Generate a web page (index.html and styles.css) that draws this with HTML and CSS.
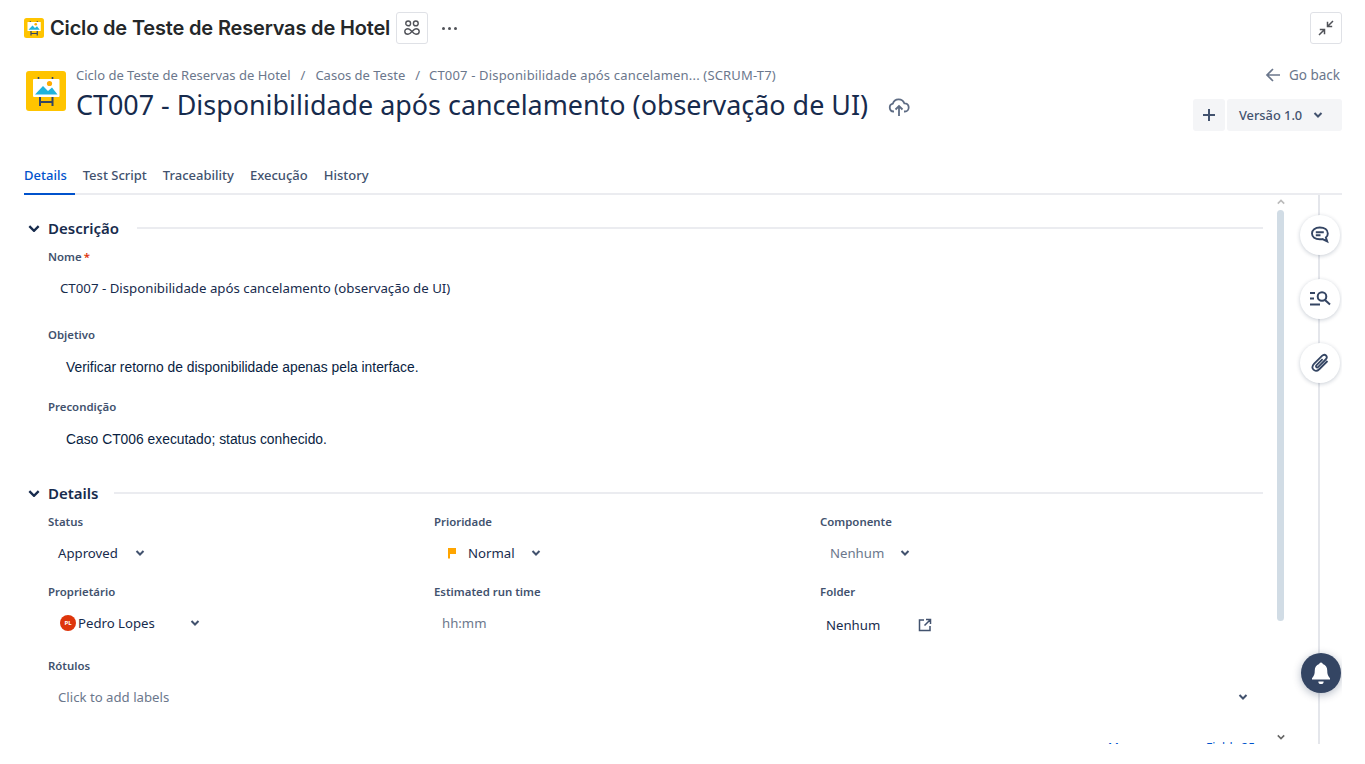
FILE: index.html
```html
<!DOCTYPE html>
<html lang="pt">
<head>
  <meta charset="UTF-8" />
  <meta name="viewport" content="width=device-width, initial-scale=1.0" />
  <title>CT007 - Disponibilidade após cancelamento</title>
  <link rel="stylesheet" href="styles.css">
</head>
<body>
  <div class="page">
    <div class="topbar">
      <svg class="project-icon-small" viewBox="0 0 40 40">
        <rect width="40" height="40" rx="5" fill="#ffc400"/>
        <path d="M12.500 6v4M26.500 6v4" stroke="#344563" stroke-width="2"/>
        <rect x="7" y="8" width="26.500" height="18" rx="1" fill="#fff"/>
        <path d="M9 23.500 17 15l5 5 4-3.500 5.500 7z" fill="#1fb3dc"/>
        <circle cx="23.500" cy="12.500" r="2.600" fill="#ffab00"/>
        <path d="M14 26v9M26.500 26v9M14 31h12.500" stroke="#344563" stroke-width="2.400" fill="none"/>
      </svg>
      <h1 class="project-name">Ciclo de Teste de Reservas de Hotel</h1>
      <button class="square-btn">
        <svg viewBox="0 0 18 18" width="18" height="18" fill="none" stroke="#505258" stroke-width="1.400">
          <circle cx="5.200" cy="4.400" r="2.400"/>
          <circle cx="12.800" cy="4.400" r="2.400"/>
          <path d="M5 9.700c-2 0-3.200 1.200-3.200 2.800S3 15.300 5 15.300c3 0 5-5.600 8-5.600 2 0 3.200 1.200 3.200 2.800s-1.200 2.800-3.200 2.800c-3 0-5-5.600-8-5.600z"/>
        </svg>
      </button>
      <div class="dots"><i></i><i></i><i></i></div>
      <button class="square-btn collapse-btn">
        <svg viewBox="0 0 18 18" width="18" height="18" fill="none" stroke="#505258" stroke-width="1.500">
          <path d="M16 2l-5 5M10.500 2.800v4.700h4.700"/>
          <path d="M2 16l5-5M2.800 10.500h4.700v4.700"/>
        </svg>
      </button>
    </div>

    <div class="issue-head">
      <svg class="project-icon" viewBox="0 0 40 40">
        <rect width="40" height="40" rx="3" fill="#ffc400"/>
        <path d="M12.500 6v4M26.500 6v4" stroke="#344563" stroke-width="1.600"/>
        <rect x="7" y="8" width="26.500" height="18" rx="1" fill="#fff"/>
        <path d="M9 23.500 17 15l5 5 4-3.500 5.500 7z" fill="#1fb3dc"/>
        <circle cx="23.500" cy="12.500" r="2.600" fill="#ffab00"/>
        <path d="M14 26v9M26.500 26v9M14 31h12.500" stroke="#344563" stroke-width="2" fill="none"/>
      </svg>
      <div class="issue-title">
        <div class="breadcrumb">
          <span>Ciclo de Teste de Reservas de Hotel</span><span class="sep">/</span><span>Casos de Teste</span><span class="sep">/</span><span class="crumb-last">CT007 - Disponibilidade após cancelamen... (SCRUM-T7)</span>
        </div>
        <div class="title-row">
          <h2>CT007 - Disponibilidade após cancelamento (observação de UI)</h2>
          <svg class="cloud" viewBox="0 0 22 20" width="22" height="20" fill="none" stroke="#5e6c84" stroke-width="1.800">
            <path d="M6 14.500H5.500a4 4 0 0 1-.6-7.900 6 6 0 0 1 11.400-.3 4 4 0 0 1 .6 8.200H16"/>
            <path d="M11 19v-9M7.500 12.500 11 9l3.500 3.500"/>
          </svg>
        </div>
      </div>
      <div class="issue-actions">
        <a class="go-back">
          <svg viewBox="0 0 16 16" width="16" height="16" fill="none" stroke="#6b778c" stroke-width="1.700"><path d="M15 8H2M8 2 2 8l6 6"/></svg>
          Go back
        </a>
        <div class="version-group">
          <button class="version-add">
            <svg viewBox="0 0 14 14" width="14" height="14" stroke="#42526e" stroke-width="2"><path d="M7 1v12M1 7h12"/></svg>
          </button>
          <button class="version-select">Versão 1.0 <svg class="chev" viewBox="0 0 10 6"><path d="m1.500 1 3.500 3.500L8.500 1"/></svg></button>
        </div>
      </div>
    </div>

    <div class="tabs">
      <a class="tab active">Details</a>
      <a class="tab">Test Script</a>
      <a class="tab">Traceability</a>
      <a class="tab">Execução</a>
      <a class="tab">History</a>
    </div>

    <div class="workspace">
      <div class="panel">
        <div class="section-head">
          <svg class="chev dark" viewBox="0 0 10 6"><path d="m1 1 4 4 4-4"/></svg>
          <h3>Descrição</h3>
          <span class="rule"></span>
        </div>
        <div class="label first">Nome<span class="req">*</span></div>
        <div class="value name-value">CT007 - Disponibilidade após cancelamento (observação de UI)</div>
        <div class="label objetivo">Objetivo</div>
        <div class="value rich">Verificar retorno de disponibilidade apenas pela interface.</div>
        <div class="label precond">Precondição</div>
        <div class="value rich">Caso CT006 executado; status conhecido.</div>

        <div class="section-head details-head">
          <svg class="chev dark" viewBox="0 0 10 6"><path d="m1 1 4 4 4-4"/></svg>
          <h3>Details</h3>
          <span class="rule"></span>
        </div>
        <div class="fields">
          <div class="field">
            <div class="label">Status</div>
            <div class="select status-select">Approved <svg class="chev" viewBox="0 0 10 6"><path d="m1.500 1 3.500 3.500L8.500 1"/></svg></div>
          </div>
          <div class="field">
            <div class="label">Prioridade</div>
            <div class="select prio-select">
              <svg class="flag" viewBox="0 0 10 12" width="10" height="12"><path d="M1 1h8v6H3v4.500H1z" fill="#ffa500"/></svg>
              Normal <svg class="chev" viewBox="0 0 10 6"><path d="m1.500 1 3.500 3.500L8.500 1"/></svg>
            </div>
          </div>
          <div class="field">
            <div class="label">Componente</div>
            <div class="select comp-select"><span class="muted">Nenhum</span> <svg class="chev" viewBox="0 0 10 6"><path d="m1.500 1 3.500 3.500L8.500 1"/></svg></div>
          </div>
          <div class="field">
            <div class="label">Proprietário</div>
            <div class="select owner-select">
              <span class="avatar">PL</span>Pedro Lopes
              <svg class="chev" viewBox="0 0 10 6"><path d="m1.500 1 3.500 3.500L8.500 1"/></svg>
            </div>
          </div>
          <div class="field">
            <div class="label">Estimated run time</div>
            <div class="select time-select"><span class="muted">hh:mm</span></div>
          </div>
          <div class="field">
            <div class="label">Folder</div>
            <div class="select folder-select">Nenhum
              <svg viewBox="0 0 14 14" width="14" height="14" fill="none" stroke="#42526e" stroke-width="1.500"><path d="M6 2H1.500v10.500H12V8M8 1.500h4.500V6M12.500 1.500 6.500 7.500"/></svg>
            </div>
          </div>
        </div>
        <div class="label labels-label">Rótulos</div>
        <div class="labels-row">
          <span class="muted">Click to add labels</span>
          <svg class="chev" viewBox="0 0 10 6"><path d="m1.500 1 3.500 3.500L8.500 1"/></svg>
        </div>
        <div class="more-links"><a class="more-a">More</a><a>Fields 35</a></div>
      </div>

      <div class="scroll-track">
        <svg class="scroll-arrow" viewBox="0 0 10 6"><path d="m1 5 4-4 4 4"/></svg>
        <div class="scroll-thumb"></div>
        <svg class="scroll-arrow down" viewBox="0 0 10 6"><path d="m1 1 4 4 4-4"/></svg>
      </div>

      <div class="rail">
        <button class="rail-btn">
          <svg viewBox="0 0 20 20" width="20" height="20" fill="none" stroke="#344563" stroke-width="1.900">
            <path d="M9.800 2.500c4.700 0 8 2.400 8 5.900 0 1.700-.7 3.100-1.900 4.100l1.300 3.900-4.700-2.300c-.8.200-1.700.2-2.700.2-4.700 0-7.800-2.400-7.800-5.900s3.100-5.900 7.800-5.900z"/>
            <path d="M5.800 7.200h8M5.800 10.200h4.700"/>
          </svg>
        </button>
        <button class="rail-btn">
          <svg viewBox="0 0 22 18" width="22" height="18" fill="none" stroke="#344563" stroke-width="2">
            <path d="M1 3h5M1 8.500h4M1 14.500h10"/>
            <circle cx="13" cy="6.500" r="4.300"/>
            <path d="m16 10 5 4.500"/>
          </svg>
        </button>
        <button class="rail-btn">
          <svg viewBox="0 0 20 20" width="20" height="20" fill="none" stroke="#344563" stroke-width="1.800">
            <path d="M17.500 8 9.500 16c-2 2-4.500 2.200-6 .7s-1.200-4 .7-6l7.800-7.800c1.300-1.300 3-1.400 4-.4s.9 2.700-.4 4l-7.300 7.300c-.7.700-1.500.8-2 .3s-.4-1.300.3-2l6-6"/>
          </svg>
        </button>
        <button class="bell-btn">
          <svg viewBox="0 0 20 20" width="24" height="24" fill="#fff">
            <path d="M10 1.200a1.500 1.500 0 0 1 1.500 1.400c2.500.7 3.700 2.800 3.700 5.400 0 3 .5 4.500 2.300 6.300v1.200h-15v-1.200c1.800-1.800 2.300-3.300 2.300-6.300 0-2.600 1.200-4.700 3.700-5.400A1.500 1.500 0 0 1 10 1.200z"/>
            <path d="M7.800 17h4.400a2.200 2.200 0 0 1-4.400 0z"/>
          </svg>
        </button>
      </div>
    </div>
  </div>
</body>
</html>
```

FILE: styles.css
```css
* {
  box-sizing: border-box;
}
html, body {
  margin: 0;
  padding: 0;
  background: #fff;
}
body {
  font-family: "Noto Sans", "Open Sans", sans-serif;
  color: #172b4d;
  font-size: 14px;
}
.page {
  height: 764px;
  overflow: hidden;
  padding: 0 23px 0 24px;
}
button {
  font-family: inherit;
  border: none;
  background: none;
  padding: 0;
}
svg {
  display: block;
  flex: none;
}

/* top bar */
.topbar {
  display: flex;
  align-items: center;
  padding-top: 12px;
  height: 44px;
}
.project-icon-small {
  width: 20px;
  height: 20px;
  margin-right: 6px;
}
.project-name {
  margin: 0;
  font-family: Inter, sans-serif;
  font-size: 20px;
  font-weight: 600;
  letter-spacing: -0.17px;
  color: #242729;
  margin-right: 6px;
}
.square-btn {
  width: 32px;
  height: 32px;
  display: flex;
  align-items: center;
  justify-content: center;
  border: 1px solid #dfe1e6;
  border-radius: 3px;
}
.dots {
  display: flex;
  gap: 3px;
  margin-left: 14px;
}
.dots i {
  width: 3px;
  height: 3px;
  border-radius: 50%;
  background: #505258;
}
.collapse-btn {
  margin-left: auto;
}

/* issue header */
.issue-head {
  display: flex;
  margin-top: 22px;
  height: 94px;
}
.project-icon {
  width: 40px;
  height: 40px;
  margin: 5px 10px 0 2px;
}
.breadcrumb {
  font-size: 13px;
  line-height: 18px;
  color: #6b778c;
}
.sep {
  margin: 0 10px;
}
.crumb-last {
  letter-spacing: 0.17px;
  margin-left: -1px;
}
.title-row {
  display: flex;
  align-items: center;
  margin-top: 4px;
}
.title-row h2 {
  margin: 0;
  font-size: 26.900px;
  line-height: 34px;
  font-weight: 400;
  color: #172b4d;
}
.cloud {
  margin: 4px 0 0 20px;
}
.issue-actions {
  margin-left: auto;
  display: flex;
  flex-direction: column;
  align-items: flex-end;
}
.go-back {
  display: flex;
  align-items: center;
  gap: 8px;
  color: #6b778c;
  font-size: 13.500px;
  line-height: 18px;
  padding-right: 2px;
}
.version-group {
  display: flex;
  gap: 2px;
  margin-top: 15px;
}
.version-add,
.version-select {
  height: 32px;
  background: #f4f5f7;
  border-radius: 3px;
  display: flex;
  align-items: center;
  color: #42526e;
  font-size: 12.800px;
  font-weight: 500;
}
.version-add {
  width: 32px;
  justify-content: center;
}
.version-select {
  width: 115px;
  padding-left: 12px;
  gap: 11px;
}
.chev {
  width: 10px;
  height: 6px;
  fill: none;
  stroke: #42526e;
  stroke-width: 2;
}
.chev.dark {
  width: 12px;
  height: 7px;
  stroke: #172b4d;
}

/* tabs */
.tabs {
  display: flex;
  border-bottom: 2px solid #ebecf0;
  height: 35px;
}
.tab {
  padding: 5px 8px 0;
  height: 35px;
  font-size: 13px;
  font-weight: 500;
  line-height: 20px;
  color: #42526e;
}
.tab.active {
  padding-left: 0;
  color: #0052cc;
  border-bottom: 2px solid #0052cc;
}

/* main area */
.workspace {
  display: flex;
  height: 549px;
  overflow: hidden;
}
.panel {
  width: 1239px;
  flex: none;
  padding-top: 23px;
}
.section-head {
  display: flex;
  align-items: center;
  height: 20px;
  padding-left: 4px;
}
.section-head h3 {
  margin: 0 0 0 8px;
  font-size: 15px;
  font-weight: 600;
  color: #172b4d;
}
.rule {
  flex: 1;
  height: 2px;
  background: #ebecf0;
  margin-left: 18px;
}
.details-head {
  margin-top: 35px;
}
.details-head .rule {
  margin-left: 15px;
}
.label {
  margin-left: 24px;
  font-size: 11.400px;
  line-height: 16px;
  font-weight: 600;
  color: #42526e;
}
.label.first {
  margin-top: 11px;
}
.req {
  color: #de350b;
  margin-left: 2px;
}
.value {
  font-size: 13.250px;
  line-height: 18px;
  color: #172b4d;
}
.name-value {
  margin: 14px 0 0 36px;
}
.objetivo {
  margin-top: 30px;
}
.precond {
  margin-top: 23px;
}
.rich {
  font-family: "Liberation Sans", Arial, sans-serif;
  font-size: 13.850px;
  margin: 15px 0 0 42px;
  color: #091e42;
}
.fields {
  display: grid;
  grid-template-columns: repeat(3, 386px);
  grid-auto-rows: 70px;
  margin: 11px 0 0 24px;
}
.field .label {
  margin-left: 0;
}
.select {
  display: flex;
  align-items: center;
  height: 20px;
  margin-top: 13px;
  font-size: 13.200px;
  color: #172b4d;
}
.muted {
  color: #6b778c;
}
.status-select {
  padding-left: 10px;
  gap: 17px;
}
.prio-select {
  padding-left: 13px;
  gap: 11px;
}
.prio-select .chev {
  margin-left: 5px;
}
.comp-select {
  padding-left: 10px;
  gap: 16px;
}
.owner-select {
  padding-left: 12px;
}
.owner-select .chev {
  margin-left: 35px;
}
.avatar {
  width: 16px;
  height: 16px;
  border-radius: 50%;
  background: #de350b;
  color: #fff;
  font-size: 6px;
  font-weight: 700;
  line-height: 16px;
  text-align: center;
  margin-right: 2px;
}
.time-select {
  padding-left: 8px;
}
.folder-select {
  padding-left: 6px;
  gap: 38px;
  margin-top: 15px;
}
.labels-label {
  margin-top: 4px;
}
.labels-row {
  display: flex;
  align-items: center;
  justify-content: space-between;
  margin: 13px 15px 0 34px;
  height: 20px;
  font-size: 13.200px;
}
.more-links {
  display: flex;
  margin: 32px 0 0 1084px;
  font-size: 12px;
  color: #0052cc;
}
.more-a {
  width: 98px;
}

/* scrollbar + rail */
.scroll-track {
  width: 8px;
  margin-left: 14px;
  flex: none;
  padding-top: 4px;
}
.scroll-arrow {
  width: 8px;
  height: 6px;
  fill: none;
  stroke: #bbb;
  stroke-width: 2;
}
.scroll-thumb {
  width: 7px;
  height: 411px;
  background: #d1dce5;
  border-radius: 4px;
  margin-top: 5px;
}
.scroll-arrow.down {
  stroke: #666;
  margin-top: 113px;
}
.rail {
  width: 40px;
  margin-left: 15px;
  flex: none;
  display: flex;
  flex-direction: column;
  align-items: center;
  gap: 24px;
  padding-top: 20px;
  background: linear-gradient(#e4e6eb, #e4e6eb) 18px 0 / 2px 100% no-repeat;
}
.rail-btn {
  width: 40px;
  height: 40px;
  border-radius: 50%;
  background: #fff;
  display: flex;
  align-items: center;
  justify-content: center;
  box-shadow: 0 1px 4px rgba(9, 30, 66, 0.22);
}
.bell-btn {
  width: 40px;
  height: 40px;
  border-radius: 50%;
  background: #344563;
  display: flex;
  align-items: center;
  justify-content: center;
  box-shadow: 0 2px 8px rgba(9, 30, 66, 0.3);
  margin: 246px 0 0 2px;
}
```
